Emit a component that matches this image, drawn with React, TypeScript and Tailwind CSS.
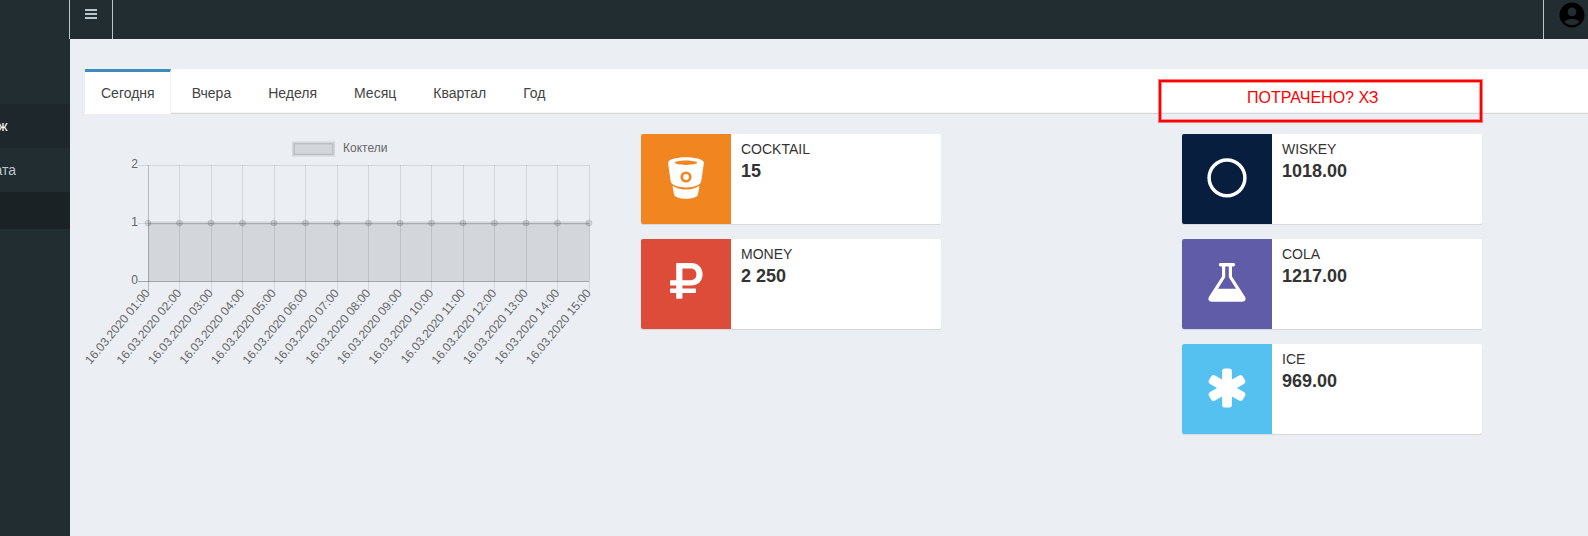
import React from "react";
import { MdAccountCircle } from "react-icons/md";

const TABS = ["Сегодня", "Вчера", "Неделя", "Месяц", "Квартал", "Год"];
const HOURS = Array.from({ length: 15 }, (_, i) => String(i + 1).padStart(2, "0"));

function BucketIcon() {
  return (
    <svg width="36" height="42" viewBox="0 0 36 42" fill="none" className="-mt-[2px]">
      <path
        fill="#fff"
        fillRule="evenodd"
        d="M18 0.2C8 0.2 0.2 2.6 0.2 5.6C0.2 8 2.3 21.4 2.9 25C3.6 27.8 10.2 30.4 18 30.4C25.8 30.4 32.4 27.8 33.1 25C33.7 21.4 35.8 8 35.8 5.6C35.8 2.6 28 0.2 18 0.2ZM18 3.4C24.2 3.4 29.2 4.4 29.2 5.6C29.2 6.9 24.2 7.9 18 7.9C11.8 7.9 6.8 6.9 6.8 5.6C6.8 4.4 11.8 3.4 18 3.4ZM18 14.4A5.6 5.6 0 1 0 18 25.6A5.6 5.6 0 1 0 18 14.4Z"
      />
      <circle cx="18" cy="20" r="2.9" fill="#fff" />
      <path
        fill="#fff"
        d="M4.9 28.9C5.6 28.8 9.5 32.6 18 32.6C26.5 32.6 30.4 28.8 31.1 28.9C31.6 29 31.4 29.8 31.2 30.6C30.7 33.2 30.1 37 29.7 38.2C28.5 40.4 23.6 41.7 18 41.7C12.4 41.7 7.5 40.4 6.3 38.2C5.9 37 5.3 33.2 4.8 30.6C4.6 29.8 4.4 29 4.9 28.9Z"
      />
    </svg>
  );
}

function RubleIcon() {
  return (
    <svg width="33" height="36" viewBox="0 0 33 36" className="-mt-[6px]">
      <path
        fill="#fff"
        fillRule="evenodd"
        d="M7 0H21C28 0 32.6 4.7 32.6 11.3C32.6 18 28 22.6 21 22.6H12.4V25.4H25.2Q26 25.4 26 26.2V29.2Q26 30 25.2 30H12.4V35Q12.4 35.8 11.6 35.8H7Q6.2 35.8 6.2 35V30H0.8Q0 30 0 29.2V26.2Q0 25.4 0.8 25.4H6.2V22.6H0.8Q0 22.6 0 21.8V18Q0 17.2 0.8 17.2H6.2V0.8Q6.2 0 7 0ZM12.4 5.4V17.2H20.6C24.2 17.2 26.4 14.9 26.4 11.3C26.4 7.7 24.2 5.4 20.6 5.4Z"
      />
    </svg>
  );
}

function CircleIcon() {
  return (
    <svg width="40" height="40" viewBox="0 0 40 40" className="-mt-[2px]">
      <circle cx="20" cy="19.8" r="17.9" fill="none" stroke="#fff" strokeWidth="3.5" />
    </svg>
  );
}

function FlaskIcon() {
  return (
    <svg width="38" height="39" viewBox="0 0 38 39" className="-mt-[3px]">
      <path
        fill="#fff"
        fillRule="evenodd"
        d="M12.2 0H25.8Q27.2 0 27.2 1.6Q27.2 3.4 25.8 3.4H24V13.4L36.8 33.6C38.6 36.5 37.3 38.8 34 38.8H4C0.7 38.8 -0.6 36.5 1.2 33.6L14 13.4V3.4H12.2Q10.8 3.4 10.8 1.6Q10.8 0 12.2 0ZM17.2 3.4V14.3L10 25.7H28L20.8 14.3V3.4Z"
      />
    </svg>
  );
}

function AsteriskIcon() {
  return (
    <svg width="40" height="40" viewBox="-20 -20 40 40" fill="#fff" className="-mt-[3px]">
      {[0, 60, 120].map((angle) => (
        <rect key={angle} x="-4.9" y="-19.5" width="9.8" height="39" rx="2.8" transform={`rotate(${angle})`} />
      ))}
    </svg>
  );
}

function InfoCard({
  color,
  icon,
  label,
  value,
}: {
  color: string;
  icon: React.ReactNode;
  label: string;
  value: string;
}) {
  return (
    <div className="flex h-[90px] w-[300px] rounded-[2px] bg-white shadow-[0_1px_1px_rgba(0,0,0,0.1)]">
      <div className={`flex h-[90px] w-[90px] shrink-0 items-center justify-center rounded-l-[2px] text-white ${color}`}>
        {icon}
      </div>
      <div className="px-[10px] py-[5px] text-[#333]">
        <div className="text-[14px] leading-[20px]">{label}</div>
        <div className="text-[18px] leading-[25px] font-bold">{value}</div>
      </div>
    </div>
  );
}

function CocktailChart() {
  return (
    <svg width="520" height="250" viewBox="80 130 520 250" className="block" fontSize="12" fill="#666">
      <rect x="293.5" y="143" width="40" height="12" fill="rgba(0,0,0,0.1)" />
      <rect x="293.5" y="143" width="40" height="12" fill="none" stroke="rgba(0,0,0,0.1)" strokeWidth="3" />
      <text x="343" y="152">Коктели</text>

      <g shapeRendering="crispEdges" fill="none" stroke="rgba(0,0,0,0.1)">
        <path d="M138 165.5H589M138 223.5H589" />
        <path d="M138 281.5H589" stroke="rgba(0,0,0,0.3)" />
        {HOURS.map((h, i) => (
          <path
            key={h}
            d={`M${Math.floor(148.1 + i * 31.5) + 0.5} 165V291`}
            stroke={i === 0 ? "rgba(0,0,0,0.22)" : undefined}
          />
        ))}
      </g>
      <rect x="148" y="223" width="441.6" height="58" fill="rgba(0,0,0,0.1)" />
      <path d="M148 223H589" fill="none" stroke="rgba(0,0,0,0.1)" strokeWidth="3" />
      {HOURS.map((h, i) => (
        <circle key={h} cx={148 + i * 31.5} cy="223" r="3" fill="rgba(0,0,0,0.1)" stroke="rgba(0,0,0,0.1)" />
      ))}

      <g textAnchor="end">
        <text x="138" y="168">2</text>
        <text x="138" y="226">1</text>
        <text x="138" y="284">0</text>
      </g>
      {HOURS.map((h, i) => (
        <text key={h} textAnchor="end" transform={`translate(${147.6 + i * 31.5} 290.8) rotate(-50)`} y="4">
          {`16.03.2020 ${h}:00`}
        </text>
      ))}
    </svg>
  );
}

export default function App() {
  return (
    <div className="flex h-[536px] w-[1588px] overflow-hidden bg-[#ebeff4] font-['Liberation_Sans',Arial,sans-serif] text-[14px] leading-[20px]">
      <aside className="w-[70px] shrink-0 bg-[#222d32]">
        <div className="h-[39px] border-r border-[#b8c7ce]" />
        <div className="h-[65px]" />
        <div className="flex h-[44px] items-center bg-[#1e282c] text-white">
          <span className="flex w-[7.5px] justify-end overflow-hidden">ж</span>
        </div>
        <div className="flex h-[44px] items-center text-[#b8c7ce]">
          <span className="flex w-[16px] justify-end overflow-hidden">ата</span>
        </div>
        <div className="h-[37px] bg-[#1a2226]" />
      </aside>

      <div className="min-w-0 flex-1">
        <header className="flex h-[39px] justify-between bg-[#222d32]">
          <div className="flex w-[43px] justify-center border-r border-[#b8c7ce] pt-[9px]">
            <svg width="12" height="10" viewBox="0 0 12 10" fill="#b8c7ce" shapeRendering="crispEdges">
              <path d="M0 0H12V2H0ZM0 4H12V6H0ZM0 8H12V10H0Z" />
            </svg>
          </div>
          <div className="w-[45px] border-l border-[#b8c7ce] pl-[12.5px] text-black">
            <MdAccountCircle size={30} className="-mt-[0.5px]" />
          </div>
        </header>

        <main className="pt-[30px] pl-[15px]">
          <nav className="relative flex h-[45px] gap-[5px] bg-white text-[#444] shadow-[inset_0_-1px_0_#d5d8dc,inset_0_-2px_0_#f4f4f4]">
            {TABS.map((tab, i) => (
              <div
                key={tab}
                className={
                  i === 0
                    ? "border-t-[3px] border-r border-t-[#3c8dbc] border-r-[#f4f4f4] bg-white pt-[11px] pr-[15px] pl-[16px]"
                    : "px-[16px] pt-[14px]"
                }
              >
                {tab}
              </div>
            ))}
            <div className="absolute top-[11px] left-[1074px] h-[42px] w-[323px] border-2 border-[#ff0000] pt-[4px] pl-[86px] text-[16px] leading-[24px] text-[#ff0000] shadow-[0_0_0_1px_rgba(255,0,0,0.5),inset_0_0_0_1px_rgba(255,0,0,0.4)]">
              ПОТРАЧЕНО? ХЗ
            </div>
          </nav>

          <div className="flex">
            <div className="-ml-[5px] w-[561px] pt-[16px]">
              <CocktailChart />
            </div>
            <div className="flex w-[541px] flex-col gap-[15px] pt-[20px]">
              <InfoCard color="bg-[#f18520]" icon={<BucketIcon />} label="COCKTAIL" value="15" />
              <InfoCard color="bg-[#dd4b39]" icon={<RubleIcon />} label="MONEY" value="2 250" />
            </div>
            <div className="flex flex-col gap-[15px] pt-[20px]">
              <InfoCard color="bg-[#081e3f]" icon={<CircleIcon />} label="WISKEY" value="1018.00" />
              <InfoCard color="bg-[#605ca8]" icon={<FlaskIcon />} label="COLA" value="1217.00" />
              <InfoCard color="bg-[#55c1f0]" icon={<AsteriskIcon />} label="ICE" value="969.00" />
            </div>
          </div>
        </main>
      </div>
    </div>
  );
}
